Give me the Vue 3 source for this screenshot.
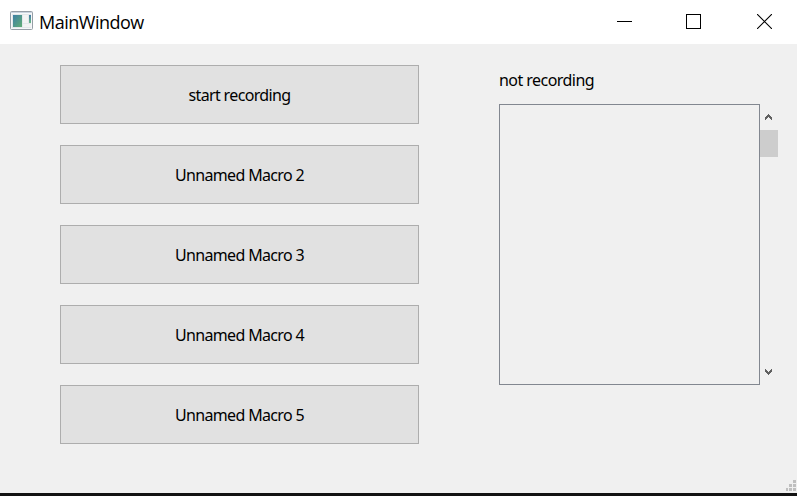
<script setup>
const buttons = ['start recording', 'Unnamed Macro 2', 'Unnamed Macro 3', 'Unnamed Macro 4', 'Unnamed Macro 5']
</script>

<template>
  <div class="window">
    <header class="titlebar">
      <svg class="app-icon" width="23" height="19" viewBox="0 0 23 19">
        <defs>
          <linearGradient id="pane" x1="0" y1="0" x2="1" y2="1">
            <stop offset="0" stop-color="#3d7fa5" />
            <stop offset="1" stop-color="#61ad75" />
          </linearGradient>
          <linearGradient id="slim" x1="0" y1="0" x2="0" y2="1">
            <stop offset="0" stop-color="#4479a5" />
            <stop offset="1" stop-color="#69b885" />
          </linearGradient>
        </defs>
        <rect x=".5" y=".5" width="22" height="18" rx="1" fill="#f6f8f9" stroke="#969ea6" />
        <path d="M1 1.5H22" stroke="#c9d3df" />
        <rect x="2" y="3" width="19" height="14" fill="#e3e8eb" />
        <rect x="3" y="4" width="9" height="12" fill="url(#pane)" />
        <rect x="13" y="4" width="5" height="8" fill="#f2f3f3" />
        <rect x="13" y="13" width="8" height="3" fill="#f2f3f3" />
        <rect x="19" y="4" width="2" height="8" fill="url(#slim)" />
      </svg>
      <h1 class="title">MainWindow</h1>
      <div class="controls">
        <svg width="15" height="15" viewBox="0 0 15 15"><path d="M0 7.5H15" stroke="#000" /></svg>
        <svg width="15" height="15" viewBox="0 0 15 15"><rect x=".5" y=".5" width="14" height="14" fill="none" stroke="#000" /></svg>
        <svg width="15" height="15" viewBox="0 0 15 15"><path d="M0 0L15 15M15 0L0 15" stroke="#000" stroke-width="1.1" /></svg>
      </div>
    </header>
    <main class="content">
      <div class="macros">
        <button v-for="label in buttons" :key="label" class="macro" type="button"><span>{{ label }}</span></button>
      </div>
      <section class="log">
        <p class="status"><span>not recording</span></p>
        <div class="list">
          <div class="view"></div>
          <div class="scrollbar">
            <svg width="7" height="6" viewBox="0 0 7 6" shape-rendering="crispEdges"><path d="M3 0h1v1h1v1h1v1h1v3h-1v-1h-1v-1h-1v-1h-1v1h-1v1h-1v1h-1v-3h1v-1h1v-1h1z" fill="#606060" /></svg>
            <div class="thumb"></div>
            <svg class="down" width="7" height="6" viewBox="0 0 7 6" shape-rendering="crispEdges"><path d="M3 6h1v-1h1v-1h1v-1h1v-3h-1v1h-1v1h-1v1h-1v-1h-1v-1h-1v-1h-1v3h1v1h1v1h1z" fill="#606060" /></svg>
          </div>
        </div>
      </section>
    </main>
    <svg class="grip" width="10" height="11" viewBox="0 0 10 11">
      <path d="M7 0h3v3h-3zM3 4h3v3h-3zM7 4h3v3h-3zM0 8h2v3h-2zM3 8h3v3h-3zM7 8h3v3h-3z" fill="#bfbfbf" />
    </svg>
  </div>
</template>

<style>
body { margin: 0; overflow: hidden; }
</style>

<style scoped>
.window {
  position: relative;
  box-sizing: border-box;
  width: 797px;
  height: 496px;
  background: #f0f0f0;
  border-bottom: 3px solid #121212;
  color: #000;
  font: 16px/20px "Noto Sans", sans-serif;
}
.titlebar {
  display: flex;
  align-items: flex-start;
  box-sizing: border-box;
  height: 44px;
  padding: 11px 25px 0 10px;
  background: #fff;
}
svg { display: block; flex: none; }
.title {
  margin: 0 0 0 6px;
  font: 400 18px/22px "Open Sans", sans-serif;
  letter-spacing: -0.5px;
}
.controls {
  display: flex;
  margin: 3px 0 0 auto;
}
.controls svg:nth-child(2) { margin: 0 56px 0 54px; }
.content {
  display: flex;
  gap: 80px;
  padding: 21px 0 0 60px;
}
.macros {
  display: flex;
  flex-direction: column;
  gap: 21px;
  width: 359px;
}
.macro {
  height: 59px;
  padding: 1px 0 0;
  border: 1px solid #adadad;
  background: #e1e1e1;
  color: #000;
  font: inherit;
  letter-spacing: -0.65px;
}
.status {
  height: 20px;
  margin: 5px 0 14px;
  letter-spacing: -0.55px;
}
.list { display: flex; }
.view {
  box-sizing: border-box;
  width: 261px;
  height: 281px;
  border: 1px solid #828790;
}
.scrollbar {
  display: flex;
  flex-direction: column;
  align-items: flex-start;
  box-sizing: border-box;
  width: 18px;
  height: 281px;
  padding: 10px 0;
}
.scrollbar svg { margin-left: 5px; }
.thumb {
  width: 18px;
  height: 27px;
  margin-top: 10px;
  background: #cdcdcd;
}
.scrollbar .down { margin-top: auto; }
.grip {
  position: absolute;
  right: 1px;
  bottom: 2px;
}
</style>
